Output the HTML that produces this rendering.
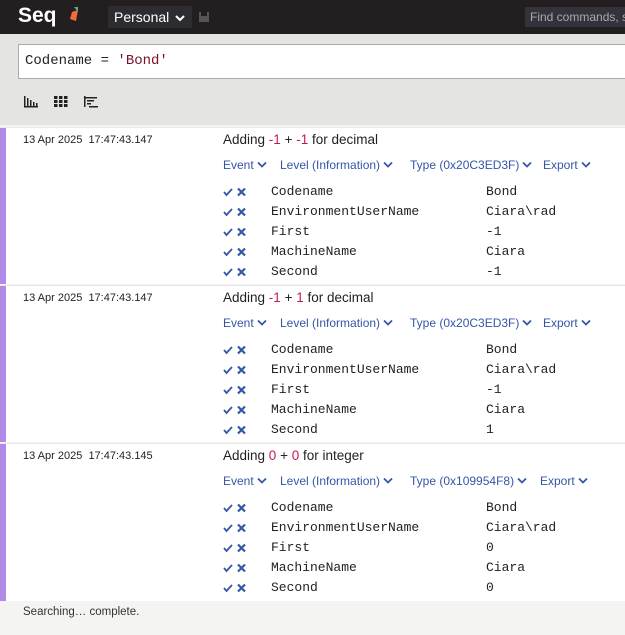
<!DOCTYPE html>
<html><head><style>
*{margin:0;padding:0;box-sizing:border-box}
body{width:625px;height:635px;overflow:hidden;background:#f4f4f3;font-family:"Liberation Sans",sans-serif;position:relative}
.top{position:absolute;left:0;top:0;width:625px;height:34px;background:#231f20}
.logo{position:absolute;left:18px;top:4px;color:#fff;font-weight:bold;font-size:21px}
.pers{position:absolute;left:108px;top:6px;width:84px;height:22px;background:#2e2c33;color:#fff;font-size:14px;padding:3px 0 0 6px}
.find{position:absolute;left:525px;top:7px;width:100px;height:20px;background:#34323a;color:#aaa;font-size:12px;padding:3px 0 0 5px;white-space:nowrap;overflow:hidden}
.gray{position:absolute;left:0;top:34px;width:625px;height:91px;background:#e4e4e0}
.q{position:absolute;left:18px;top:10px;width:610px;height:35px;background:#fff;border:1px solid #aaa;font-family:"Liberation Mono",monospace;font-size:14px;padding:8px 0 0 6px;color:#222}
.q span{color:#7a0f2a}
.ev{position:absolute;left:0;width:625px;height:157px;background:#fff;border-top:1px solid #e8e8e8}
.bar{position:absolute;left:0;top:0;width:6px;height:100%;background:#b08ae6}
.ts{position:absolute;left:23px;top:6px;font-size:11px;color:#222}
.ti{position:absolute;left:223px;top:4px;font-size:13.5px;color:#222}
.ti b{font-weight:normal;color:#c2185b}
.links{position:absolute;left:223px;top:30px;font-size:12px;color:#3456a8;white-space:nowrap}
.links span{position:absolute;top:0}
.links svg{vertical-align:1px;margin-left:3px}
.pr{position:absolute;left:223px;font-size:13px;font-family:"Liberation Mono",monospace;color:#222;white-space:nowrap;height:16px;width:400px}
.pr svg{position:absolute;left:0;top:3px}
.pr .n{position:absolute;left:48px;top:0}
.pr .v{position:absolute;left:263px;top:0}
.foot{position:absolute;left:23px;top:606px;font-size:11.5px;color:#333}
</style></head><body>
<div class="top">
<div class="logo">Seq</div>
<svg style="position:absolute;left:70px;top:7px" width="8" height="14"><polygon points="4,0 8,0 8,5" fill="#3dbf8a"/><polygon points="2,5 8,3 6,14 0,12" fill="#f26b3a"/></svg>
<div class="pers">Personal <svg width="10" height="8" style="margin-left:2px"><path d="M1,2 L5,6 L9,2" stroke="#fff" stroke-width="2" fill="none"/></svg></div>
<svg style="position:absolute;left:199px;top:12px" width="10" height="10"><rect width="10" height="10" fill="#555"/><rect x="2" y="0" width="6" height="4" fill="#231f20"/></svg>
<div class="find">Find commands, s</div>
</div>
<div class="gray">
<div class="q">Codename = <span>'Bond'</span></div>
<svg style="position:absolute;left:24px;top:62px" width="80" height="12">
<g fill="#222"><rect x="0" y="0" width="1.5" height="11"/><rect x="0" y="10" width="14" height="1.5"/><rect x="3" y="2" width="1.5" height="8"/><rect x="6" y="4" width="1.5" height="6"/><rect x="9" y="6" width="1.5" height="4"/><rect x="12" y="7" width="1.5" height="3"/>
<rect x="30" y="0" width="3.5" height="3"/><rect x="35" y="0" width="3.5" height="3"/><rect x="40" y="0" width="3.5" height="3"/><rect x="30" y="4" width="3.5" height="3"/><rect x="35" y="4" width="3.5" height="3"/><rect x="40" y="4" width="3.5" height="3"/><rect x="30" y="8" width="3.5" height="3"/><rect x="35" y="8" width="3.5" height="3"/><rect x="40" y="8" width="3.5" height="3"/>
<rect x="60" y="0" width="1.5" height="11"/><rect x="60" y="1" width="13" height="1.5"/><rect x="63" y="4" width="7" height="1.5"/><rect x="63" y="7" width="4" height="1.5"/><rect x="65" y="10" width="9" height="1.5"/></g></svg>
</div>
<div id="evs"></div>
<div class="foot">Searching… complete.</div>
<script>
var ch='<svg width="10" height="7"><path d="M1,1.5 L5,5.5 L9,1.5" stroke="#3456a8" stroke-width="1.8" fill="none"/></svg>';
var ic='<svg width="24" height="10"><path d="M1,5 L3.5,8 L9,2" stroke="#3456a8" stroke-width="1.8" fill="none"/><path d="M15,1.5 L22,8.5 M22,1.5 L15,8.5" stroke="#3456a8" stroke-width="2.2" fill="none"/></svg>';
var d=[[127,'17:47:43.147','-1','-1','decimal','0x20C3ED3F',['-1','-1']],[285,'17:47:43.147','-1','1','decimal','0x20C3ED3F',['-1','1']],[443,'17:47:43.145','0','0','integer','0x109954F8',['0','0']]];
var h='';
d.forEach(function(e,i){
var exp=i==2?'317px':'320px';
h+='<div class="ev" style="top:'+e[0]+'px'+(i==2?';height:158px':'')+'"><div class="bar"></div><div class="ts">13 Apr 2025&nbsp; 17:47:43.'+e[1].slice(9)+'</div><div class="ti">Adding <b>'+e[2]+'</b> + <b>'+e[3]+'</b> for '+e[4]+'</div><div class="links"><span style="left:0">Event'+ch+'</span><span style="left:57px">Level (Information)'+ch+'</span><span style="left:187px">Type ('+e[5]+')'+ch+'</span><span style="left:'+exp+'">Export'+ch+'</span></div>';
var p=[['Codename','Bond'],['EnvironmentUserName','Ciara\\rad'],['First',e[6][0]],['MachineName','Ciara'],['Second',e[6][1]]];
p.forEach(function(q,j){h+='<div class="pr" style="top:'+(56+j*20)+'px">'+ic+'<span class="n">'+q[0]+'</span><span class="v">'+q[1]+'</span></div>';});
h+='</div>';});
document.getElementById('evs').innerHTML=h;
</script>
</body></html>
